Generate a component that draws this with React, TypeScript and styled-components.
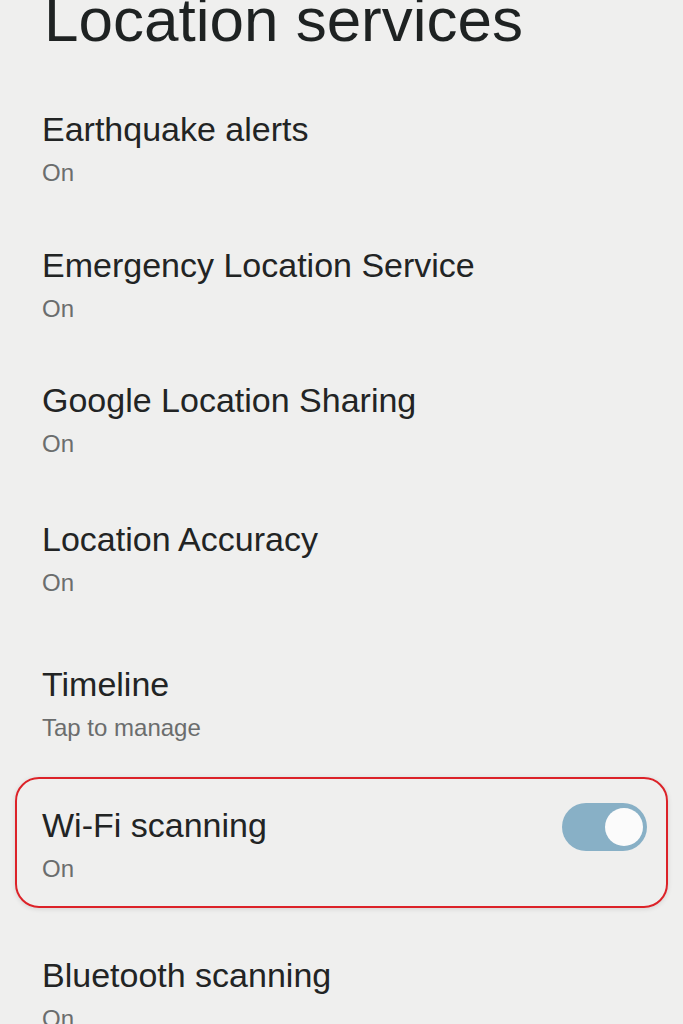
import React from "react";
import styled, { createGlobalStyle } from "styled-components";

const Global = createGlobalStyle`
  html, body { margin: 0; padding: 0; background: #efefee; }
  body { font-family: "Liberation Sans", Arial, sans-serif; overflow: hidden; }
`;

const Page = styled.div`
  width: 683px;
  height: 1024px;
  overflow: hidden;
  background: #efefee;
  display: flex;
  flex-direction: column;
`;

const Heading = styled.h1`
  margin: -12px 0 0 0;
  padding-left: 44px;
  font-family: "Liberation Sans", Arial, sans-serif;
  font-weight: 400;
  font-size: 62px;
  line-height: 64px;
  color: #1e2222;
  white-space: nowrap;
`;

const List = styled.div`
  display: flex;
  flex-direction: column;
`;

const Row = styled.div<{ $top: number }>`
  display: flex;
  align-items: flex-start;
  justify-content: space-between;
  margin-top: ${(p) => p.$top}px;
  padding-left: 42px;
`;

const HighlightRow = styled.div<{ $top: number }>`
  display: flex;
  align-items: flex-start;
  justify-content: space-between;
  margin: ${(p) => p.$top}px 15px 0 15px;
  padding: 26px 19px 23px 25px;
  border: 2.5px solid #dc2228;
  border-radius: 24px;
  box-shadow: 0 1px 5px rgba(0, 0, 0, 0.12);
`;

const Texts = styled.div`
  display: flex;
  flex-direction: column;
  gap: 10px;
`;

const Title = styled.div`
  font-size: 34px;
  line-height: 40px;
  color: #222424;
`;

const Sub = styled.div`
  font-size: 24px;
  line-height: 28px;
  color: #6b6d6d;
`;

const Track = styled.div`
  width: 85px;
  height: 48px;
  margin-top: -2px;
  border-radius: 24px;
  background: #88b0c6;
  display: flex;
  align-items: center;
  justify-content: flex-end;
  padding-right: 4px;
  box-sizing: border-box;
`;

const Knob = styled.div`
  width: 38px;
  height: 38px;
  border-radius: 50%;
  background: #fbfbfb;
`;

const items = [
  { title: "Earthquake alerts", sub: "On", top: 57 },
  { title: "Emergency Location Service", sub: "On", top: 58 },
  { title: "Google Location Sharing", sub: "On", top: 57 },
  { title: "Location Accuracy", sub: "On", top: 61 },
  { title: "Timeline", sub: "Tap to manage", top: 67 },
];

export default function App() {
  return (
    <Page>
      <Global />
      <Heading>Location services</Heading>
      <List>
        {items.map((it) => (
          <Row key={it.title} $top={it.top}>
            <Texts>
              <Title>{it.title}</Title>
              <Sub>{it.sub}</Sub>
            </Texts>
          </Row>
        ))}
        <HighlightRow $top={35}>
          <Texts>
            <Title>Wi-Fi scanning</Title>
            <Sub>On</Sub>
          </Texts>
          <Track>
            <Knob />
          </Track>
        </HighlightRow>
        <Row $top={47}>
          <Texts>
            <Title>Bluetooth scanning</Title>
            <Sub>On</Sub>
          </Texts>
        </Row>
      </List>
    </Page>
  );
}
